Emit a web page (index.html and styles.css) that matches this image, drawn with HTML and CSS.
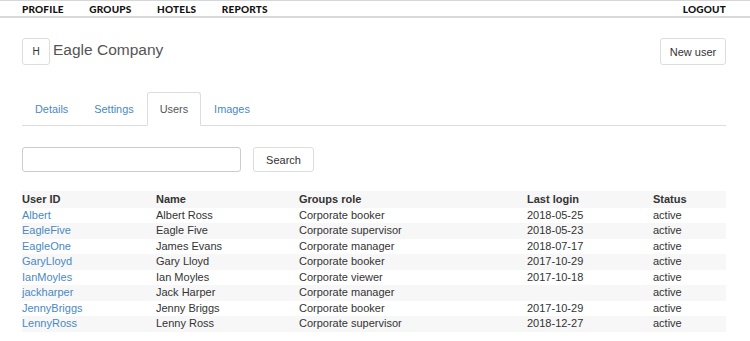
FILE: index.html
```html
<!DOCTYPE html>
<html lang="en">
<head>
    <meta charset="UTF-8">
    <title>Eagle Company - Users</title>
    <link rel="stylesheet" href="styles.css">
</head>
<body>
    <nav class="topnav">
        <div class="nav-left">
            <a href="#">Profile</a>
            <a href="#">Groups</a>
            <a href="#">Hotels</a>
            <a href="#">Reports</a>
        </div>
        <a href="#">Logout</a>
    </nav>
    <div class="container">
        <div class="page-head">
            <div class="company">
                <span class="logo-box">H</span>
                <h1>Eagle Company</h1>
            </div>
            <button class="btn">New user</button>
        </div>

        <ul class="tabs">
            <li><a href="#">Details</a></li>
            <li><a href="#">Settings</a></li>
            <li class="active"><a href="#">Users</a></li>
            <li><a href="#">Images</a></li>
        </ul>

        <div class="search-row">
            <input type="text" class="search-input">
            <button class="btn">Search</button>
        </div>

        <table class="users">
            <colgroup>
                <col style="width:134px">
                <col style="width:143px">
                <col style="width:228px">
                <col style="width:126px">
                <col>
            </colgroup>
            <thead>
                <tr><th>User ID</th><th>Name</th><th>Groups role</th><th>Last login</th><th>Status</th></tr>
            </thead>
            <tbody>
                <tr><td><a href="#">Albert</a></td><td>Albert Ross</td><td>Corporate booker</td><td>2018-05-25</td><td>active</td></tr>
                <tr><td><a href="#">EagleFive</a></td><td>Eagle Five</td><td>Corporate supervisor</td><td>2018-05-23</td><td>active</td></tr>
                <tr><td><a href="#">EagleOne</a></td><td>James Evans</td><td>Corporate manager</td><td>2018-07-17</td><td>active</td></tr>
                <tr><td><a href="#">GaryLloyd</a></td><td>Gary Lloyd</td><td>Corporate booker</td><td>2017-10-29</td><td>active</td></tr>
                <tr><td><a href="#">IanMoyles</a></td><td>Ian Moyles</td><td>Corporate viewer</td><td>2017-10-18</td><td>active</td></tr>
                <tr><td><a href="#">jackharper</a></td><td>Jack Harper</td><td>Corporate manager</td><td></td><td>active</td></tr>
                <tr><td><a href="#">JennyBriggs</a></td><td>Jenny Briggs</td><td>Corporate booker</td><td>2017-10-29</td><td>active</td></tr>
                <tr><td><a href="#">LennyRoss</a></td><td>Lenny Ross</td><td>Corporate supervisor</td><td>2018-12-27</td><td>active</td></tr>
            </tbody>
        </table>
    </div>
</body>
</html>
```

FILE: styles.css
```css
body {
    margin: 0;
    padding: 0;
    font-family: "Liberation Sans", Arial, sans-serif;
    font-size: 11px;
    color: #333;
    background: #fff;
}
a {
    color: #4a89c2;
    text-decoration: none;
}
.topnav {
    display: flex;
    justify-content: space-between;
    align-items: center;
    height: 15px;
    padding: 0 24px 0 22px;
    border-top: 1px solid #d6d6d6;
    border-bottom: 2px solid #d9d9d9;
}
.topnav a {
    color: #111;
    font-family: Lato, sans-serif;
    font-weight: 900;
    font-size: 10px;
    text-transform: uppercase;
    letter-spacing: 0.2px;
}
.nav-left {
    display: flex;
    gap: 25.5px;
}
.container {
    padding: 0 24px 0 22px;
}
.page-head {
    display: flex;
    justify-content: space-between;
    align-items: flex-start;
    margin-top: 20px;
}
.company {
    display: flex;
    align-items: center;
    gap: 3px;
}
.logo-box {
    display: flex;
    align-items: center;
    justify-content: center;
    width: 26px;
    height: 25px;
    border: 1px solid #ddd;
    border-radius: 3px;
    font-size: 10px;
}
.company h1 {
    margin: 0 0 4px;
    font-size: 15.5px;
    font-weight: normal;
    color: #555;
}
.btn {
    height: 26px;
    padding: 0 10px;
    background: #fff;
    border: 1px solid #ddd;
    border-radius: 3px;
    font-family: "Liberation Sans", Arial, sans-serif;
    font-size: 11px;
    color: #333;
}
.page-head .btn {
    width: 66px;
    height: 27px;
    padding: 0;
}
.tabs {
    display: flex;
    list-style: none;
    margin: 27px 0 0;
    padding: 0;
    border-bottom: 1px solid #ddd;
}
.tabs li {
    margin-bottom: -1px;
}
.tabs a {
    display: block;
    padding: 9px 12px;
    font-size: 10.9px;
    line-height: 14px;
    border: 1px solid transparent;
    border-radius: 3px 3px 0 0;
}
.tabs .active a {
    color: #555;
    background: #fff;
    border-color: #ddd #ddd #fff;
}
.search-row {
    display: flex;
    gap: 12px;
    margin-top: 21px;
}
.search-input {
    width: 215px;
    height: 21px;
    padding: 1px;
    border: 1px solid #ccc;
    border-radius: 3px;
}
.search-row .btn {
    width: 61px;
    height: 25px;
    padding: 0;
}
.users {
    width: 100%;
    margin-top: 19px;
    border-collapse: collapse;
    table-layout: fixed;
}
.users th,
.users td {
    padding: 1px 0;
    text-align: left;
    line-height: 13.5px;
    white-space: nowrap;
}
.users th {
    font-weight: bold;
    padding: 2px 0 1px;
}
.users thead tr,
.users tbody tr:nth-child(even) {
    background: #f7f7f7;
}
```
